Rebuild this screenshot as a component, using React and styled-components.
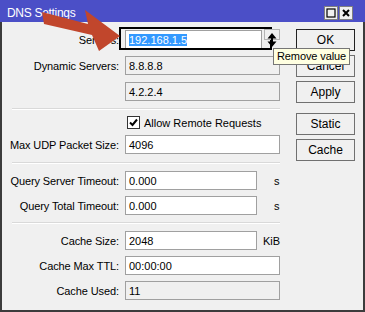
import React from 'react';
import styled, { createGlobalStyle } from 'styled-components';

const Global = createGlobalStyle`
  html, body { margin: 0; padding: 0; background: #fff; }
  body { font-family: "Liberation Sans", Arial, sans-serif; font-size: 11px; color: #000; }
`;

const Window = styled.div`
  position: relative;
  width: 365px;
  height: 312px;
  overflow: hidden;
  background: #f0f0f0;
`;

const TitleBar = styled.div`
  display: flex;
  align-items: center;
  justify-content: space-between;
  height: 22px;
  padding: 0 12px 0 7px;
  background: #4b4fc7;
  box-sizing: border-box;
`;

const Title = styled.span`
  color: #fff;
  font-size: 12px;
  letter-spacing: -0.3px;
  padding-top: 3px;
`;

const TitleButtons = styled.div`
  display: flex;
  gap: 1px;
  padding-top: 4px;
`;

const TitleButton = styled.div`
  display: flex;
  align-items: center;
  justify-content: center;
  width: 12px;
  height: 12px;
  background: #f0f0f0;
  border: 1px solid #808080;
`;

const Body = styled.div`
  display: flex;
  height: 290px;
  box-sizing: border-box;
  padding-top: 8px;
  border: 2px solid #3c3c3c;
  border-top: none;
`;

const Form = styled.div`
  display: flex;
  flex-direction: column;
  width: 278px;
`;

const Row = styled.div`
  display: grid;
  grid-template-columns: 117px auto 1fr;
  column-gap: 6px;
  align-items: center;
  height: ${p => p.$h || 19}px;
  margin-top: ${p => p.$mt || 0}px;
`;

const Label = styled.span`
  text-align: right;
  white-space: nowrap;
  letter-spacing: -0.1px;
`;

const FieldWrap = styled.div`
  position: relative;
  display: flex;
  align-items: center;
`;

const Field = styled.div`
  box-sizing: border-box;
  width: ${p => p.$w}px;
  height: 19px;
  padding: 2px 3px;
  border: 1px solid #a0a0a0;
  background: ${p => (p.$ro ? '#f0f0f0' : '#fff')};
  line-height: 14px;
  white-space: nowrap;
`;

const Selected = styled.span`
  background: #3399ff;
  color: #fff;
`;

const FocusRing = styled.div`
  position: absolute;
  left: -6px;
  top: -3px;
  width: 153px;
  height: 23px;
  box-sizing: border-box;
  border: 2px solid #000;
  pointer-events: none;
`;

const SpinButton = styled.div`
  position: absolute;
  left: 139px;
  top: -1px;
  width: 16px;
  height: 11px;
  box-sizing: border-box;
  border: 1px solid #b4b4b4;
  background: #f0f0f0;
`;

const SpinGlyph = styled.svg`
  position: absolute;
  left: 142px;
  top: 3px;
`;

const Unit = styled.span`
  padding-left: ${p => p.$pl || 0}px;
`;

const Separator = styled.div`
  height: 1px;
  margin: ${p => p.$mt}px 0 0 10px;
  background: #d9d9d9;
  border-bottom: 1px solid #fff;
`;

const CheckRow = styled.label`
  display: flex;
  align-items: center;
  gap: 4px;
  height: 13px;
  margin: ${p => p.$mt}px 0 0 125px;
`;

const CheckBox = styled.span`
  display: flex;
  align-items: center;
  justify-content: center;
  width: 13px;
  height: 13px;
  box-sizing: border-box;
  border: 1px solid #333;
  background: #fff;
`;

const ButtonColumn = styled.div`
  display: flex;
  flex-direction: column;
  gap: 4px;
  margin: -1px 0 0 16px;
`;

const Button = styled.div`
  display: flex;
  align-items: center;
  justify-content: center;
  box-sizing: border-box;
  width: 59px;
  height: 22px;
  margin-top: ${p => p.$mt || 0}px;
  border: 1px solid ${p => (p.$default ? '#222' : '#707070')};
  background: #f0f0f0;
  font-size: 12px;
`;

const Tooltip = styled.div`
  position: absolute;
  left: 273px;
  top: 48px;
  padding: 1px 3px 2px 3px;
  background: #ffffe1;
  border: 1px solid #767676;
  font-size: 11px;
  letter-spacing: -0.1px;
  white-space: nowrap;
`;

const ArrowOverlay = styled.svg`
  position: absolute;
  left: 0;
  top: 0;
  pointer-events: none;
`;

const FieldRow = ({ label, w, ro, value, unit, unitPad, mt }) => (
  <Row $mt={mt}>
    <Label>{label}</Label>
    <Field $w={w} $ro={ro}>{value}</Field>
    {unit ? <Unit $pl={unitPad}>{unit}</Unit> : <span />}
  </Row>
);

export default function App() {
  return (
    <Window>
      <Global />
      <TitleBar>
        <Title>DNS Settings</Title>
        <TitleButtons>
          <TitleButton>
            <svg width="10" height="10"><rect x="1" y="1" width="8" height="8" fill="none" stroke="#000" strokeWidth="1.2" /></svg>
          </TitleButton>
          <TitleButton>
            <svg width="10" height="10"><path d="M2 2 L8 8 M8 2 L2 8" stroke="#000" strokeWidth="2" /></svg>
          </TitleButton>
        </TitleButtons>
      </TitleBar>
      <Body>
        <Form>
          <Row>
            <Label>Servers:</Label>
            <FieldWrap>
              <Field $w={137}><Selected>192.168.1.5</Selected></Field>
              <FocusRing />
              <SpinButton />
              <SpinGlyph width="10" height="14" viewBox="0 0 10 14">
                <path d="M5 0 L9.5 5.5 L0.5 5.5 Z M5 14 L9.5 8.5 L0.5 8.5 Z" fill="#000" />
                <rect x="4" y="5" width="2" height="4" fill="#000" />
              </SpinGlyph>
            </FieldWrap>
            <span />
          </Row>
          <FieldRow mt={7} label="Dynamic Servers:" w={155} ro value="8.8.8.8" />
          <FieldRow mt={7} label="" w={155} ro value="4.2.2.4" />
          <Separator $mt={7} />
          <CheckRow $mt={6}>
            <CheckBox>
              <svg width="9" height="9" viewBox="0 0 9 9"><path d="M1 4.5 L3.5 7 L8 1.5" fill="none" stroke="#000" strokeWidth="2" /></svg>
            </CheckBox>
            Allow Remote Requests
          </CheckRow>
          <FieldRow mt={6} label="Max UDP Packet Size:" w={155} value="4096" />
          <Separator $mt={8} />
          <FieldRow mt={7} label="Query Server Timeout:" w={132} value="0.000" unit="s" unitPad={11} />
          <FieldRow mt={6} label="Query Total Timeout:" w={132} value="0.000" unit="s" unitPad={11} />
          <Separator $mt={7} />
          <FieldRow mt={7} label="Cache Size:" w={132} value="2048" unit="KiB" unitPad={0} />
          <FieldRow mt={6} label="Cache Max TTL:" w={155} value="00:00:00" />
          <FieldRow mt={6} label="Cache Used:" w={155} ro value="11" />
        </Form>
        <ButtonColumn>
          <Button $default>OK</Button>
          <Button>Cancel</Button>
          <Button>Apply</Button>
          <Button $mt={6}>Static</Button>
          <Button>Cache</Button>
        </ButtonColumn>
      </Body>
      <Tooltip>Remove value</Tooltip>
      <ArrowOverlay width="130" height="60" viewBox="0 0 130 60">
        <path d="M42 12 L88 24 L85 10 L120 36 L99 51 L92 35 L44 24 Z" fill="#c1462c" />
      </ArrowOverlay>
    </Window>
  );
}
